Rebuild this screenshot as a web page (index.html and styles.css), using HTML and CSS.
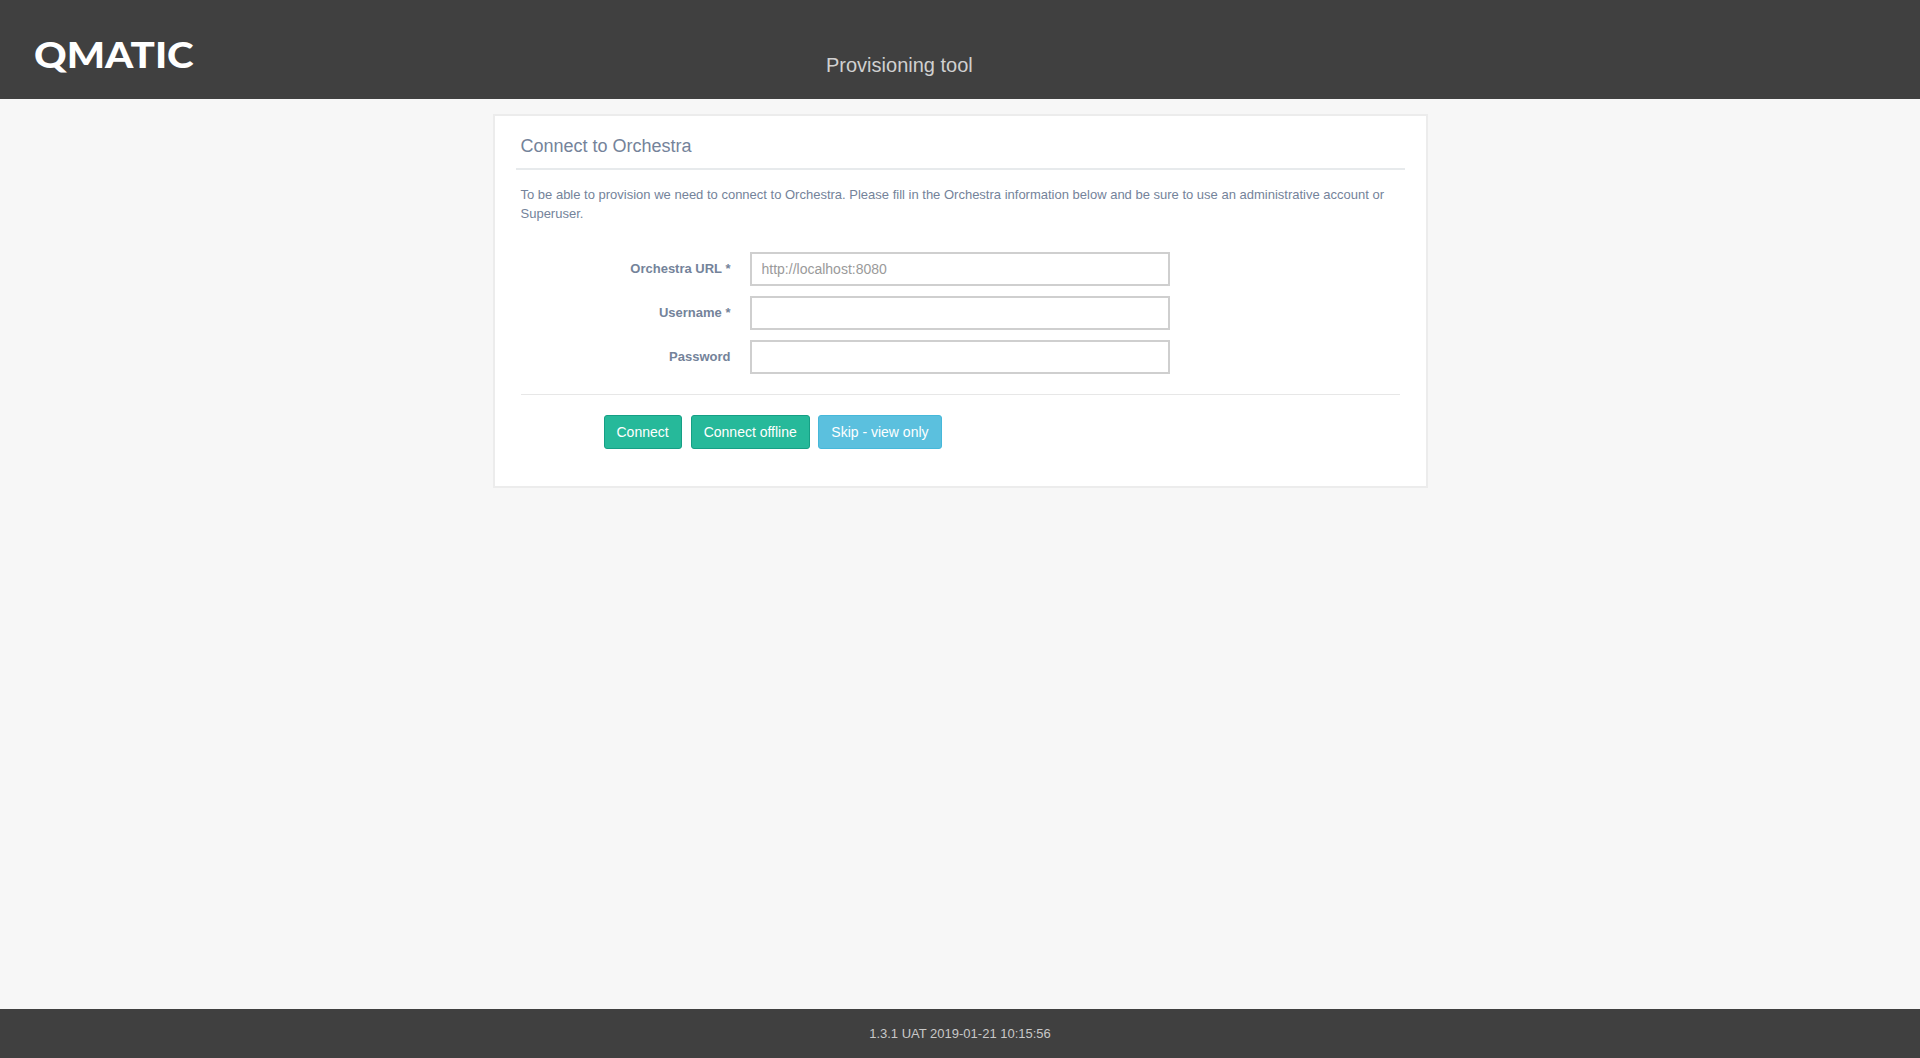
FILE: index.html
```html
<!DOCTYPE html>
<html lang="en">
<head>
    <meta charset="UTF-8">
    <meta name="viewport" content="width=device-width, initial-scale=1.0">
    <title>Provisioning tool</title>
    <link rel="stylesheet" href="styles.css">
</head>
<body>
    <header class="top-bar">
        <div class="logo"><span class="logo-text">QMATIC</span></div>
        <div class="app-title">Provisioning tool</div>
    </header>

    <main class="content">
        <section class="panel">
            <h2 class="panel-title">Connect to Orchestra</h2>
            <p class="panel-intro">To be able to provision we need to connect to Orchestra. Please fill in the Orchestra information below and be sure to use an administrative account or Superuser.</p>

            <form class="connect-form">
                <div class="form-row">
                    <label class="form-label" for="url">Orchestra URL *</label>
                    <input class="form-input" id="url" type="text" placeholder="http://localhost:8080">
                </div>
                <div class="form-row">
                    <label class="form-label" for="username">Username *</label>
                    <input class="form-input" id="username" type="text">
                </div>
                <div class="form-row">
                    <label class="form-label" for="password">Password</label>
                    <input class="form-input" id="password" type="password">
                </div>

                <div class="form-divider"></div>

                <div class="form-actions">
                    <button class="btn btn-primary" type="button">Connect</button>
                    <button class="btn btn-primary" type="button">Connect offline</button>
                    <button class="btn btn-info" type="button">Skip - view only</button>
                </div>
            </form>
        </section>
    </main>

    <footer class="bottom-bar">1.3.1 UAT 2019-01-21 10:15:56</footer>
</body>
</html>
```

FILE: styles.css
```css
* {
    box-sizing: border-box;
}

body {
    display: flex;
    flex-direction: column;
    min-height: 100vh;
    margin: 0;
    background: #f7f7f7;
    color: #74839a;
    font-family: 'Liberation Sans', Arial, sans-serif;
    font-size: 13px;
    line-height: 18.5px;
}

.top-bar {
    display: flex;
    flex: none;
    height: 99px;
    background: #404040;
}

.logo {
    width: 826px;
    padding: 34px 0 0 34px;
    color: #fff;
    font-family: Lato, sans-serif;
    font-size: 36px;
    font-weight: 900;
    line-height: 40px;
}

.logo-text {
    display: inline-block;
    transform: scaleX(1.12);
    transform-origin: left center;
}

.app-title {
    padding-top: 54px;
    color: #d0d0d0;
    font-size: 20px;
    line-height: 22px;
}

.content {
    flex: 1;
    padding-top: 15px;
}

.panel {
    width: 935px;
    height: 374px;
    margin: 0 auto;
    padding: 0 21px;
    background: #fff;
    border: 2px solid #ececec;
}

.panel-title {
    margin: 0;
    padding: 19px 5px 11px;
    border-bottom: 2px solid #e7eaec;
    font-size: 18px;
    font-weight: normal;
    line-height: 22px;
}

.panel-intro {
    margin: 16px 5px 0;
}

.connect-form {
    margin: 0 5px;
}

.form-row {
    display: flex;
    align-items: center;
    margin-top: 10px;
}

.form-row:first-child {
    margin-top: 29px;
}

.form-label {
    width: 210px;
    padding-top: 1px;
    font-weight: bold;
    text-align: right;
}

.form-input {
    width: 420px;
    height: 34px;
    margin-left: 19px;
    padding: 0 10px;
    background: #fff;
    border: 2px solid #cfcfcf;
    font-family: inherit;
    font-size: 14px;
}

.form-input::placeholder {
    color: #9a9a9a;
}

.form-divider {
    margin-top: 20px;
    border-top: 1px solid #e7e7e7;
}

.form-actions {
    display: flex;
    gap: 9px;
    margin: 20px 0 0 83px;
}

.btn {
    height: 34px;
    padding: 0 12px;
    border: 1px solid;
    border-radius: 3px;
    color: #fff;
    font-family: inherit;
    font-size: 14px;
}

.btn-primary {
    background: #26b99a;
    border-color: #169f85;
}

.btn-info {
    margin-left: -1px;
    padding: 0 12.5px;
    background: #5bc0de;
    border-color: #46b8da;
}

.bottom-bar {
    flex: none;
    height: 49px;
    background: #404040;
    color: #c8c8c8;
    font-size: 13px;
    line-height: 49px;
    text-align: center;
}
```
